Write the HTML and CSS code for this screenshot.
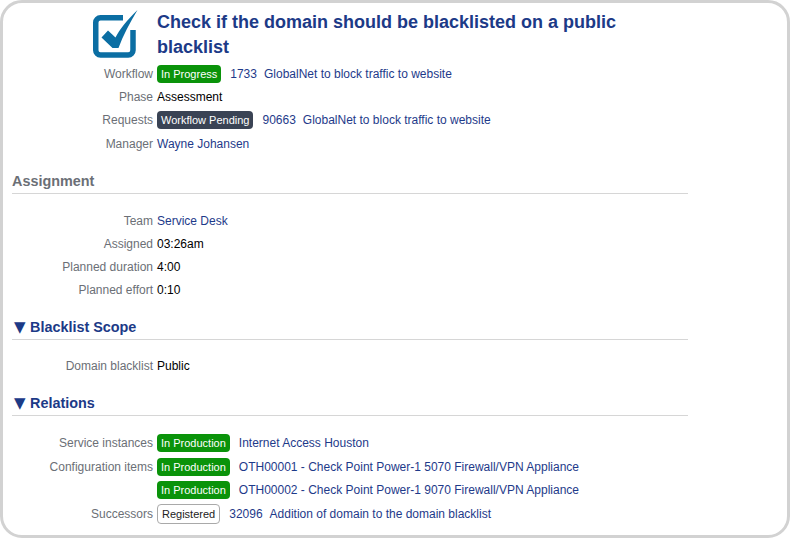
FILE: index.html
```html
<!DOCTYPE html>
<html lang="en">
<head>
  <meta charset="UTF-8">
  <meta name="viewport" content="width=device-width, initial-scale=1.0">
  <title>Check if the domain should be blacklisted</title>
  <link rel="stylesheet" href="styles.css">
</head>
<body>
  <div class="frame">
    <div class="content">

      <div class="header">
        <svg class="task-icon" width="46" height="50" viewBox="0 0 46 50">
          <path d="M31 7.75 H8.5 A4.75 4.75 0 0 0 3.75 12.5 V40.25 A4.75 4.75 0 0 0 8.5 45 H36.25 A4.75 4.75 0 0 0 41 40.25 V20" fill="none" stroke="#0b6ea3" stroke-width="5.5"/>
          <path d="M9.5 27.5 L16 20.5 L23.5 27.5 C27.5 19.5 35 10 45.5 0 C38 13 31 25 26.5 38 L20.5 38 Z" fill="#0b6ea3"/>
        </svg>
        <h1>Check if the domain should be blacklisted on a public blacklist</h1>
      </div>

      <div class="rows">
        <div class="row tall">
          <div class="label">Workflow</div>
          <div class="value"><span class="badge green">In Progress</span><a class="num">1733</a><a>GlobalNet to block traffic to website</a></div>
        </div>
        <div class="row">
          <div class="label">Phase</div>
          <div class="value">Assessment</div>
        </div>
        <div class="row tall">
          <div class="label">Requests</div>
          <div class="value"><span class="badge dark">Workflow Pending</span><a class="num">90663</a><a>GlobalNet to block traffic to website</a></div>
        </div>
        <div class="row">
          <div class="label">Manager</div>
          <div class="value"><a>Wayne Johansen</a></div>
        </div>
      </div>

      <h2 class="section assignment">Assignment</h2>
      <div class="rows">
        <div class="row">
          <div class="label">Team</div>
          <div class="value"><a>Service Desk</a></div>
        </div>
        <div class="row">
          <div class="label">Assigned</div>
          <div class="value">03:26am</div>
        </div>
        <div class="row">
          <div class="label">Planned duration</div>
          <div class="value">4:00</div>
        </div>
        <div class="row">
          <div class="label">Planned effort</div>
          <div class="value">0:10</div>
        </div>
      </div>

      <h2 class="section scope"><span class="arrow">▼</span>Blacklist Scope</h2>
      <div class="rows">
        <div class="row">
          <div class="label">Domain blacklist</div>
          <div class="value">Public</div>
        </div>
      </div>

      <h2 class="section"><span class="arrow">▼</span>Relations</h2>
      <div class="rows relations">
        <div class="row">
          <div class="label">Service instances</div>
          <div class="value"><span class="badge green">In Production</span><a>Internet Access Houston</a></div>
        </div>
        <div class="row">
          <div class="label">Configuration items</div>
          <div class="value"><span class="badge green">In Production</span><a>OTH00001 - Check Point Power-1 5070 Firewall/VPN Appliance</a></div>
        </div>
        <div class="row">
          <div class="label"></div>
          <div class="value"><span class="badge green">In Production</span><a>OTH00002 - Check Point Power-1 9070 Firewall/VPN Appliance</a></div>
        </div>
        <div class="row">
          <div class="label">Successors</div>
          <div class="value"><span class="badge outline">Registered</span><a class="num">32096</a><a>Addition of domain to the domain blacklist</a></div>
        </div>
      </div>

    </div>
  </div>
</body>
</html>
```

FILE: styles.css
```css
html, body {
  margin: 0;
  padding: 0;
  background-color: #fff;
}
body {
  font-family: "Liberation Sans", Arial, sans-serif;
  font-size: 12px;
  color: #000;
}
.frame {
  box-sizing: border-box;
  width: 790px;
  height: 538px;
  border: 3px solid #d2d2d2;
  border-radius: 22px;
  overflow: hidden;
}
.content {
  width: 676px;
  padding-left: 9px;
}
.header {
  display: flex;
  align-items: flex-start;
  padding: 7px 0 2px 80px;
}
.task-icon {
  flex: none;
  margin-right: 19px;
}
h1 {
  margin: 0;
  width: 500px;
  font-size: 18px;
  line-height: 25px;
  font-weight: bold;
  color: #1c3a87;
}
.row {
  display: flex;
  align-items: center;
  height: 23px;
}
.tall {
  height: 23.5px;
}
.relations {
  margin-top: 15.5px;
}
.relations .row {
  height: 23.5px;
}
.label {
  box-sizing: border-box;
  width: 145px;
  padding-right: 4px;
  text-align: right;
  color: #6b6f76;
}
.value {
  display: flex;
  align-items: center;
}
a {
  color: #1e3a8a;
}
.num {
  margin-right: 7px;
}
.badge {
  box-sizing: border-box;
  height: 18px;
  line-height: 18px;
  padding: 0 4px;
  margin-right: 9px;
  border-radius: 4px;
  font-size: 11px;
  color: #fff;
}
.green {
  background-color: #0a930a;
}
.dark {
  background-color: #3a4354;
}
.outline {
  height: 20px;
  line-height: 18px;
  background-color: #fff;
  color: #222;
  border: 1px solid #a9a9a9;
}
.section {
  margin: 15px 0;
  height: 24px;
  line-height: 22px;
  box-sizing: border-box;
  border-bottom: 1px solid #d6d6d6;
  font-size: 14.4px;
  font-weight: bold;
  color: #1c3a87;
}
.assignment {
  color: #6b6f76;
}
.scope {
  margin-bottom: 14px;
}
.arrow {
  display: inline-block;
  width: 16px;
  margin-left: 2px;
  font-size: 15px;
  font-family: "DejaVu Sans", sans-serif;
}
```
